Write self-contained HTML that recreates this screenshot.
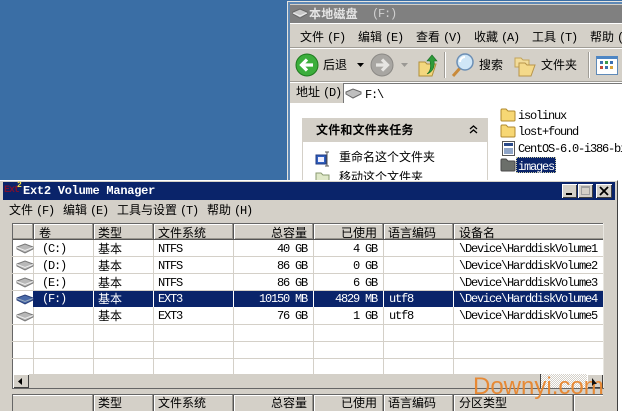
<!DOCTYPE html>
<html><head><meta charset="utf-8">
<style>
html,body{margin:0;padding:0}
body{width:622px;height:411px;overflow:hidden;position:relative;background:#3a6ea5;font-family:"Liberation Mono","WenQuanYi Zen Hei",monospace;font-size:12px;color:#000}
div,span,svg{position:absolute}
.t{white-space:nowrap;line-height:14px;height:14px}
.c{font-family:"WenQuanYi Zen Hei","Noto Sans CJK SC",sans-serif;font-size:12px}
.m{font-family:"Liberation Mono","WenQuanYi Zen Hei",monospace;font-size:12px;letter-spacing:-1.2px}
span.p{position:static;margin-left:3px;font-family:"Liberation Mono",monospace;font-size:12px;letter-spacing:-1.2px}
.r{text-align:right}
.vl{background:#d4d0c8;width:1px}
.hv{width:1px;background:#555;box-shadow:-1px 0 0 #9a978f,1px 0 0 #fff}
.hline{background:#d4d0c8;height:1px;left:12px;width:591px}
.w{color:#fff}
</style></head><body>

<!-- Explorer window -->
<div style="left:287px;top:1px;width:335px;height:410px;background:#e6e4de"></div>
<div style="left:288px;top:2px;width:334px;height:409px;background:#5e88b5"></div>
<div style="left:290px;top:4px;width:332px;height:187px;background:#d4d0c8"></div>
<div style="left:290px;top:5px;width:332px;height:18px;background:#808080"></div>
<svg style="left:292px;top:8px" width="16" height="11" viewBox="0 0 16 11"><path d="M1 4 L8 1 L15 4 L15 6 L8 10 L1 6Z" fill="#c8c8c8" stroke="#666"/><path d="M1 5 L8 8 L15 5" fill="none" stroke="#eee"/></svg>
<div class="t c" style="left:309px;top:7px;color:#e4e4e4;font-weight:bold;letter-spacing:.2px">本地磁盘</div>
<div class="t m" style="left:372px;top:7px;color:#d0d0d0">(F:)</div>
<div style="left:290px;top:23px;width:332px;height:1px;background:#fff"></div>
<div style="left:290px;top:47px;width:332px;height:1px;background:#a09d96"></div>
<div style="left:290px;top:48px;width:332px;height:1px;background:#fff"></div>
<div style="left:290px;top:81px;width:332px;height:1px;background:#a09d96"></div>
<div style="left:290px;top:82px;width:332px;height:1px;background:#fff"></div>
<div class="t c" style="left:300px;top:30px">文件<span class="p">(F)</span></div>
<div class="t c" style="left:358px;top:30px">编辑<span class="p">(E)</span></div>
<div class="t c" style="left:416px;top:30px">查看<span class="p">(V)</span></div>
<div class="t c" style="left:474px;top:30px">收藏<span class="p">(A)</span></div>
<div class="t c" style="left:532px;top:30px">工具<span class="p">(T)</span></div>
<div class="t c" style="left:590px;top:30px">帮助<span class="p">(H)</span></div>

<!-- Toolbar -->
<svg style="left:295px;top:53px" width="24" height="24" viewBox="0 0 24 24"><circle cx="12" cy="12" r="11" fill="#3cae3c" stroke="#1f7a1f"/><path d="M18 12H7M12 6.500L6.500 12L12 17.500" fill="none" stroke="#fff" stroke-width="3.2"/></svg>
<div class="t c" style="left:323px;top:58px">后退</div>
<svg style="left:357px;top:63px" width="7" height="4"><path d="M0 0H7L3.500 4Z" fill="#000"/></svg>
<svg style="left:370px;top:53px" width="24" height="24" viewBox="0 0 24 24"><circle cx="12" cy="12" r="11" fill="#a8a6a2" stroke="#8b8985"/><path d="M6 12H17M12 6.500L17.500 12L12 17.500" fill="none" stroke="#e6e5e2" stroke-width="3.2"/></svg>
<svg style="left:401px;top:63px" width="7" height="4"><path d="M0 0H7L3.500 4Z" fill="#9a9894"/></svg>
<svg style="left:417px;top:53px" width="22" height="24" viewBox="0 0 22 24"><path d="M2 9H8L10 11H19L15 23H2Z" fill="#f3d77e" stroke="#b08f3a"/><path d="M10 21C14 18 14 13 13 8H10L15 2L20 8H17C18 13 16 19 10 21Z" fill="#2e9b3a" stroke="#186d24" stroke-width=".6"/></svg>
<div style="left:444px;top:52px;width:1px;height:26px;background:#a09d96"></div>
<div style="left:445px;top:52px;width:1px;height:26px;background:#fff"></div>
<svg style="left:450px;top:52px" width="26" height="26" viewBox="0 0 26 26"><path d="M3 24L11 15" stroke="#c98a3a" stroke-width="3"/><circle cx="15" cy="10" r="8" fill="#cfe6f7" stroke="#6c8fb5" stroke-width="1.500"/><path d="M10 10A5 5 0 0 1 15 5" stroke="#fff" stroke-width="2" fill="none"/></svg>
<div class="t c" style="left:479px;top:58px">搜索</div>
<svg style="left:514px;top:55px" width="24" height="22" viewBox="0 0 24 22"><path d="M1 3H7L9 5H15V12H1Z" fill="#f2dc9a" stroke="#c3a45a"/><path d="M5 8H11L13 10H21L17 21H5Z" fill="#f4d98a" stroke="#b8954a"/></svg>
<div class="t c" style="left:541px;top:58px">文件夹</div>
<div style="left:588px;top:52px;width:1px;height:26px;background:#a09d96"></div>
<div style="left:589px;top:52px;width:1px;height:26px;background:#fff"></div>
<div style="left:596px;top:56px;width:22px;height:19px;background:#fff;border:1px solid #5f8ab8;border-top:3px solid #4d86c4;box-sizing:border-box"></div>
<div style="left:600px;top:61px;width:3px;height:3px;background:#3c6fb0;box-shadow:5px 0 #3c9a4a,10px 0 #3c6fb0,0 5px #c04a3a,5px 5px #3c6fb0,10px 5px #d9a53a"></div>

<!-- Address bar -->
<div class="t c" style="left:296px;top:85px">地址<span class="p">(D)</span></div>
<div style="left:343px;top:83px;width:279px;height:20px;background:#fff;border-top:1px solid #777;border-left:1px solid #777;box-sizing:border-box"></div>
<svg style="left:345px;top:88px" width="17" height="11" viewBox="0 0 17 11"><path d="M1 4L8 1L16 4V6L8 10L1 6Z" fill="#bfbfbf" stroke="#666"/></svg>
<div class="t m" style="left:365px;top:88px">F:\</div>

<!-- Content -->
<div style="left:290px;top:103px;width:332px;height:308px;background:#fff"></div>
<div style="left:302px;top:118px;width:186px;height:24px;background:#d4d0c8"></div>
<div style="left:302px;top:142px;width:186px;height:50px;background:#fff;border-left:1px solid #d4d0c8;border-right:1px solid #d4d0c8;box-sizing:border-box"></div>
<div class="t c" style="left:316px;top:123px;font-weight:bold;letter-spacing:.2px">文件和文件夹任务</div>
<svg style="left:469px;top:125px" width="9" height="9" viewBox="0 0 9 9"><path d="M1 4L4.500 1L8 4M1 8L4.500 5L8 8" fill="none" stroke="#000" stroke-width="1.300"/></svg>
<svg style="left:315px;top:151px" width="16" height="16" viewBox="0 0 16 16"><rect x="1" y="4" width="10" height="9" fill="#3060c0" stroke="#203a80"/><rect x="3" y="6" width="6" height="5" fill="#eef"/><path d="M12 1V15M10 1H14M10 15H14" stroke="#555"/></svg>
<div class="t c" style="left:339px;top:150px">重命名这个文件夹</div>
<svg style="left:315px;top:170px" width="16" height="14" viewBox="0 0 16 14"><path d="M1 3H6L8 5H14V14H1Z" fill="#dfe8c8" stroke="#8a9a70"/></svg>
<div class="t c" style="left:339px;top:170px">移动这个文件夹</div>

<svg style="left:500px;top:108px" width="16" height="14" viewBox="0 0 16 14"><path d="M1 2.500Q1 1 2 1H6L8 3H14Q15 3 15 4V12Q15 13 14 13H2Q1 13 1 12Z" fill="#f7d774" stroke="#b08a2e"/></svg>
<div class="t m" style="left:518px;top:109px">isolinux</div>
<svg style="left:500px;top:124px" width="16" height="14" viewBox="0 0 16 14"><path d="M1 2.500Q1 1 2 1H6L8 3H14Q15 3 15 4V12Q15 13 14 13H2Q1 13 1 12Z" fill="#f7d774" stroke="#b08a2e"/></svg>
<div class="t m" style="left:518px;top:125px">lost+found</div>
<svg style="left:502px;top:141px" width="13" height="15" viewBox="0 0 13 15"><rect x=".5" y=".5" width="12" height="14" fill="#fff" stroke="#555"/><rect x="2" y="2" width="9" height="3" fill="#2a4a8a"/><rect x="2" y="7" width="9" height="6" fill="#8fa5c8"/></svg>
<div class="t m" style="left:518px;top:142px">CentOS-6.0-i386-bi</div>
<svg style="left:500px;top:158px" width="16" height="14" viewBox="0 0 16 14"><path d="M1 2.500Q1 1 2 1H6L8 3H14Q15 3 15 4V12Q15 13 14 13H2Q1 13 1 12Z" fill="#6b6f6a" stroke="#4a4a4a"/></svg>
<div style="left:516px;top:157px;width:40px;height:16px;background:#0a246a;outline:1px dotted #c8c8a0;outline-offset:-1px"></div>
<div class="t m w" style="left:518px;top:160px">images</div>

<!-- Ext2 window -->
<div style="left:0;top:180px;width:618px;height:231px;background:#d4d0c8;border-top:1px solid #fff;border-right:1px solid #404040;box-sizing:border-box"></div>
<div style="left:3px;top:182px;width:612px;height:18px;background:#0a246a"></div>
<div class="t" style="left:4px;top:184px;color:#7a1030;font-size:10px;font-weight:bold;letter-spacing:-1px">Ext</div>
<div class="t" style="left:17px;top:179px;color:#f5e24a;font-size:8px;font-weight:bold">2</div>
<div class="t w" style="left:23px;top:184px;font-size:12px;font-weight:bold;font-family:'Liberation Mono',monospace;letter-spacing:-.25px">Ext2 Volume Manager</div>
<div style="left:562px;top:184px;width:15px;height:14px;background:#d4d0c8;box-shadow:inset 1px 1px 0 #fff,inset -1px -1px 0 #404040"></div>
<div style="left:566px;top:193px;width:6px;height:2px;background:#000"></div>
<div style="left:578px;top:184px;width:15px;height:14px;background:#d4d0c8;box-shadow:inset 1px 1px 0 #fff,inset -1px -1px 0 #404040"></div>
<div style="left:581px;top:186px;width:9px;height:9px;border:1px solid #a0a0a0;border-top-width:2px;box-sizing:border-box"></div>
<div style="left:596px;top:184px;width:16px;height:14px;background:#d4d0c8;box-shadow:inset 1px 1px 0 #fff,inset -1px -1px 0 #404040"></div>
<svg style="left:599px;top:186px" width="10" height="10"><path d="M1 1L9 9M9 1L1 9" stroke="#000" stroke-width="1.800"/></svg>
<div class="t c" style="left:9px;top:203px">文件<span class="p">(F)</span></div>
<div class="t c" style="left:63px;top:203px">编辑<span class="p">(E)</span></div>
<div class="t c" style="left:117px;top:203px">工具与设置<span class="p">(T)</span></div>
<div class="t c" style="left:207px;top:203px">帮助<span class="p">(H)</span></div>

<!-- Table top -->
<div style="left:12px;top:223px;width:591px;height:151px;background:#fff"></div>
<div style="left:12px;top:223px;width:591px;height:1px;background:#666"></div>
<div style="left:12px;top:223px;width:1px;height:165px;background:#666"></div>
<div style="left:603px;top:223px;width:1px;height:165px;background:#e8e6e0"></div>
<div style="left:13px;top:224px;width:590px;height:15px;background:#d4d0c8"></div>
<div style="left:13px;top:224px;width:590px;height:1px;background:#fff"></div>
<div style="left:13px;top:238px;width:590px;height:1px;background:#9a978f"></div>
<div style="left:13px;top:239px;width:590px;height:1px;background:#555"></div>
<div class="hv" style="left:33px;top:224px;height:15px"></div>
<div class="hv" style="left:93px;top:224px;height:15px"></div>
<div class="hv" style="left:153px;top:224px;height:15px"></div>
<div class="hv" style="left:233px;top:224px;height:15px"></div>
<div class="hv" style="left:313px;top:224px;height:15px"></div>
<div class="hv" style="left:383px;top:224px;height:15px"></div>
<div class="hv" style="left:453px;top:224px;height:15px"></div>
<div class="t c" style="left:39px;top:226px">卷</div>
<div class="t c" style="left:98px;top:226px">类型</div>
<div class="t c" style="left:158px;top:226px">文件系统</div>
<div class="t c r" style="left:233px;top:226px;width:74px">总容量</div>
<div class="t c r" style="left:313px;top:226px;width:64px">已使用</div>
<div class="t c" style="left:388px;top:226px">语言编码</div>
<div class="t c" style="left:459px;top:226px">设备名</div>

<!-- Grid -->
<div class="hline" style="top:256px"></div>
<div class="hline" style="top:273px"></div>
<div class="hline" style="top:290px"></div>
<div class="hline" style="top:324px"></div>
<div class="hline" style="top:341px"></div>
<div class="hline" style="top:358px"></div>
<div class="vl" style="left:33px;top:240px;height:134px"></div>
<div class="vl" style="left:93px;top:240px;height:134px"></div>
<div class="vl" style="left:153px;top:240px;height:134px"></div>
<div class="vl" style="left:233px;top:240px;height:134px"></div>
<div class="vl" style="left:313px;top:240px;height:134px"></div>
<div class="vl" style="left:383px;top:240px;height:134px"></div>
<div class="vl" style="left:453px;top:240px;height:134px"></div>
<div style="left:33px;top:291px;width:570px;height:16px;background:#0a246a"></div>
<div class="vl" style="left:93px;top:291px;height:16px;background:#fff"></div>
<div class="vl" style="left:153px;top:291px;height:16px;background:#fff"></div>
<div class="vl" style="left:233px;top:291px;height:16px;background:#fff"></div>
<div class="vl" style="left:313px;top:291px;height:16px;background:#fff"></div>
<div class="vl" style="left:383px;top:291px;height:16px;background:#fff"></div>
<div class="vl" style="left:453px;top:291px;height:16px;background:#fff"></div>

<!-- Row icons -->
<svg style="left:16px;top:243px" width="18" height="11" viewBox="0 0 18 11"><path d="M1 4L9 1L17 4V6L9 10L1 6Z" fill="#b8b8b8" stroke="#777"/><path d="M1 4.500L9 7.500L17 4.500" fill="none" stroke="#eee"/></svg>
<svg style="left:16px;top:260px" width="18" height="11" viewBox="0 0 18 11"><path d="M1 4L9 1L17 4V6L9 10L1 6Z" fill="#b8b8b8" stroke="#777"/><path d="M1 4.500L9 7.500L17 4.500" fill="none" stroke="#eee"/></svg>
<svg style="left:16px;top:277px" width="18" height="11" viewBox="0 0 18 11"><path d="M1 4L9 1L17 4V6L9 10L1 6Z" fill="#b8b8b8" stroke="#777"/><path d="M1 4.500L9 7.500L17 4.500" fill="none" stroke="#eee"/></svg>
<svg style="left:16px;top:294px" width="18" height="11" viewBox="0 0 18 11"><path d="M1 4L9 1L17 4V6L9 10L1 6Z" fill="#4a6aa8" stroke="#2a3f78"/><path d="M1 4.500L9 7.500L17 4.500" fill="none" stroke="#9ab"/></svg>
<svg style="left:16px;top:311px" width="18" height="11" viewBox="0 0 18 11"><path d="M1 4L9 1L17 4V6L9 10L1 6Z" fill="#b8b8b8" stroke="#777"/><path d="M1 4.500L9 7.500L17 4.500" fill="none" stroke="#eee"/></svg>

<!-- Rows -->
<div class="t m" style="left:42px;top:242px">(C:)</div><div class="t c" style="left:98px;top:242px">基本</div><div class="t m" style="left:158px;top:242px">NTFS</div><div class="t m r" style="left:233px;top:242px;width:74px">40 GB</div><div class="t m r" style="left:313px;top:242px;width:64px">4 GB</div><div class="t m" style="left:459px;top:242px">\Device\HarddiskVolume1</div>
<div class="t m" style="left:42px;top:259px">(D:)</div><div class="t c" style="left:98px;top:259px">基本</div><div class="t m" style="left:158px;top:259px">NTFS</div><div class="t m r" style="left:233px;top:259px;width:74px">86 GB</div><div class="t m r" style="left:313px;top:259px;width:64px">0 GB</div><div class="t m" style="left:459px;top:259px">\Device\HarddiskVolume2</div>
<div class="t m" style="left:42px;top:276px">(E:)</div><div class="t c" style="left:98px;top:276px">基本</div><div class="t m" style="left:158px;top:276px">NTFS</div><div class="t m r" style="left:233px;top:276px;width:74px">86 GB</div><div class="t m r" style="left:313px;top:276px;width:64px">6 GB</div><div class="t m" style="left:459px;top:276px">\Device\HarddiskVolume3</div>
<div class="t m w" style="left:42px;top:292px">(F:)</div><div class="t c w" style="left:98px;top:292px">基本</div><div class="t m w" style="left:158px;top:292px">EXT3</div><div class="t m r w" style="left:233px;top:292px;width:74px">10150 MB</div><div class="t m r w" style="left:313px;top:292px;width:64px">4829 MB</div><div class="t m w" style="left:389px;top:292px">utf8</div><div class="t m w" style="left:459px;top:292px">\Device\HarddiskVolume4</div>
<div class="t c" style="left:98px;top:309px">基本</div><div class="t m" style="left:158px;top:309px">EXT3</div><div class="t m r" style="left:233px;top:309px;width:74px">76 GB</div><div class="t m r" style="left:313px;top:309px;width:64px">1 GB</div><div class="t m" style="left:389px;top:309px">utf8</div><div class="t m" style="left:459px;top:309px">\Device\HarddiskVolume5</div>

<!-- Scrollbar -->
<div style="left:13px;top:374px;width:590px;height:14px;background:#d4d0c8"></div>
<div style="left:13px;top:374px;width:16px;height:14px;background:#d4d0c8;box-shadow:inset 1px 1px 0 #fff,inset -1px -1px 0 #404040"></div>
<svg style="left:18px;top:378px" width="5" height="7"><path d="M4 0V7L0 3.500Z" fill="#000"/></svg>
<div style="left:541px;top:374px;width:46px;height:14px;background:repeating-conic-gradient(#fff 0 25%,#d4d0c8 0 50%) 0 0/2px 2px"></div>
<div style="left:540px;top:374px;width:1px;height:14px;background:#404040"></div>
<div style="left:587px;top:374px;width:16px;height:14px;background:#d4d0c8;box-shadow:inset 1px 1px 0 #fff,inset -1px -1px 0 #404040"></div>
<div style="left:12px;top:388px;width:592px;height:1px;background:#666"></div>

<!-- Table bottom -->
<div style="left:12px;top:394px;width:591px;height:1px;background:#666"></div>
<div style="left:12px;top:394px;width:1px;height:17px;background:#666"></div>
<div style="left:13px;top:395px;width:590px;height:1px;background:#fff"></div>
<div class="hv" style="left:93px;top:395px;height:16px"></div>
<div class="hv" style="left:153px;top:395px;height:16px"></div>
<div class="hv" style="left:233px;top:395px;height:16px"></div>
<div class="hv" style="left:313px;top:395px;height:16px"></div>
<div class="hv" style="left:383px;top:395px;height:16px"></div>
<div class="hv" style="left:453px;top:395px;height:16px"></div>
<div class="hv" style="left:573px;top:395px;height:16px"></div>
<div class="t c" style="left:98px;top:396px">类型</div>
<div class="t c" style="left:158px;top:396px">文件系统</div>
<div class="t c r" style="left:233px;top:396px;width:74px">总容量</div>
<div class="t c r" style="left:313px;top:396px;width:64px">已使用</div>
<div class="t c" style="left:388px;top:396px">语言编码</div>
<div class="t c" style="left:459px;top:396px">分区类型</div>

<!-- Watermark -->
<div class="t" style="left:473px;top:373px;height:28px;line-height:28px;font-family:'Liberation Sans',sans-serif;font-size:24px;color:#e8862e;opacity:.95">Downyi.com</div>
<svg style="left:592px;top:378px" width="6" height="8"><path d="M0 0V8L2 6L5 6Z" fill="#111"/></svg>
</body></html>
